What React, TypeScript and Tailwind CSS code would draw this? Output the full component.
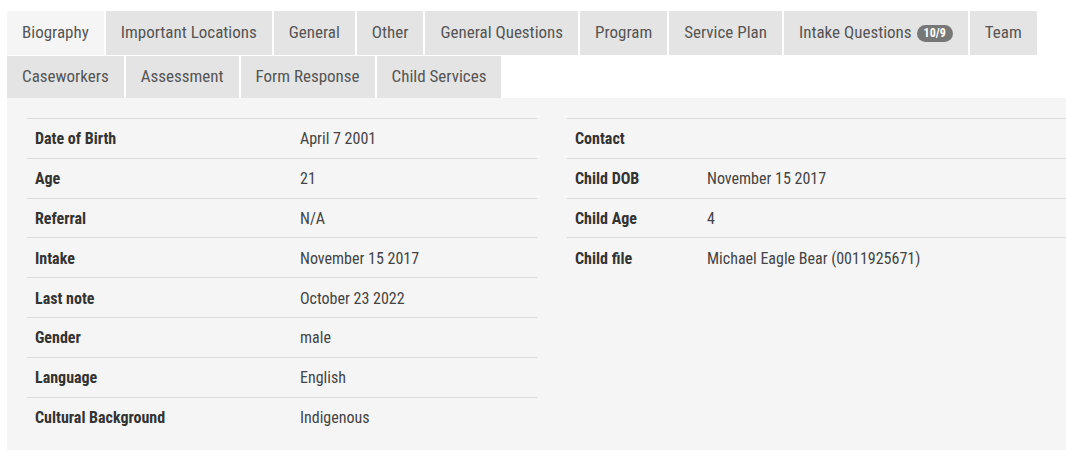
import React, { useState } from "react";

const tabsRow1 = [
  "Biography",
  "Important Locations",
  "General",
  "Other",
  "General Questions",
  "Program",
  "Service Plan",
  "Intake Questions",
  "Team",
];
const tabsRow2 = ["Caseworkers", "Assessment", "Form Response", "Child Services"];

const leftRows = [
  ["Date of Birth", "April 7 2001"],
  ["Age", "21"],
  ["Referral", "N/A"],
  ["Intake", "November 15 2017"],
  ["Last note", "October 23 2022"],
  ["Gender", "male"],
  ["Language", "English"],
  ["Cultural Background", "Indigenous"],
];

const rightRows = [
  ["Contact", ""],
  ["Child DOB", "November 15 2017"],
  ["Child Age", "4"],
  ["Child file", "Michael Eagle Bear (0011925671)"],
];

function Tab({ label, active, onClick }: { label: string; active: boolean; onClick: () => void }) {
  return (
    <button
      onClick={onClick}
      className={`flex items-center px-[15px] text-[17px] text-[#555] ${
        active ? "bg-[#f5f5f5]" : "bg-[#e4e4e4] hover:bg-[#dadada]"
      }`}
    >
      {label}
      {label === "Intake Questions" && (
        <span className="ml-[5px] rounded-full bg-[#777] px-[7px] text-[12px] font-bold leading-[17px] text-white">
          10/9
        </span>
      )}
    </button>
  );
}

function InfoTable({ rows, labelWidth }: { rows: string[][]; labelWidth: string }) {
  return (
    <div className="border-t border-[#dcdcdc]">
      {rows.map(([k, v], i) => (
        <div
          key={k}
          className={`flex h-[39.8px] items-center px-[8px] pt-[2px] ${
            i < rows.length - 1 ? "border-b border-[#dcdcdc]" : ""
          }`}
        >
          <div className={`${labelWidth} shrink-0 font-bold text-[#333]`}>{k}</div>
          <div className="text-[#444]">{v}</div>
        </div>
      ))}
    </div>
  );
}

export default function App() {
  const [active, setActive] = useState("Biography");

  return (
    <div
      className="min-h-screen bg-white pt-[11px] pl-[7px] text-[16px]"
      style={{ fontFamily: '"Roboto Condensed", Roboto, "Liberation Sans", sans-serif', fontStretch: "condensed" }}
    >
      <div className="flex h-[44px] gap-[2px]">
        {tabsRow1.map((t) => (
          <Tab key={t} label={t} active={active === t} onClick={() => setActive(t)} />
        ))}
      </div>
      <div className="mt-px flex h-[42px] gap-[2px]">
        {tabsRow2.map((t) => (
          <Tab key={t} label={t} active={active === t} onClick={() => setActive(t)} />
        ))}
      </div>
      <div className="flex h-[352px] gap-[30px] bg-[#f5f5f5] pt-[20px] pl-[20px]">
        <div className="w-[510px] shrink-0">
          <InfoTable rows={leftRows} labelWidth="w-[265px]" />
        </div>
        <div className="flex-1">
          <InfoTable rows={rightRows} labelWidth="w-[132px]" />
        </div>
      </div>
    </div>
  );
}
